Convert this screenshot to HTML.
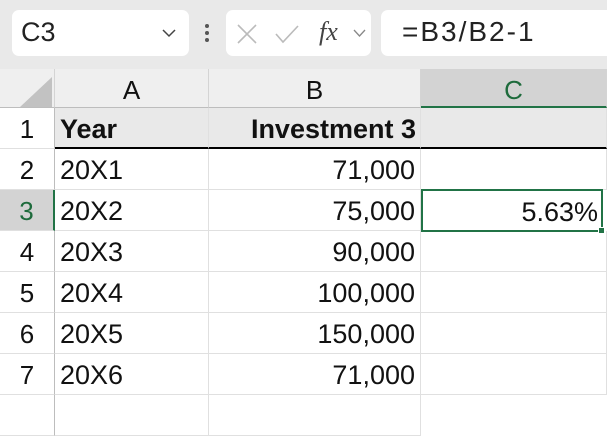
<!DOCTYPE html>
<html><head><style>
*{margin:0;padding:0;box-sizing:border-box}
body{width:607px;height:404px;overflow:hidden;background:#fff;font-family:"Liberation Sans",sans-serif;position:relative}
.tb{position:absolute;left:0;top:0;width:607px;height:69px;background:#e9e9e9}
.box{position:absolute;background:#fff;border-radius:7px;top:10px;height:46px}
.abs{position:absolute}
.ch{position:absolute;top:69px;height:39px;background:#efefef;border-right:1px solid #d4d4d4;border-bottom:1px solid #bdbdbd;font-size:26px;text-align:center;line-height:42px;color:#111}
.rh{position:absolute;left:0;width:55px;height:41px;background:#fff;border-right:1px solid #bdbdbd;border-bottom:1px solid #e0e0e0;font-size:26px;text-align:center;line-height:43px;color:#111}
.c{position:absolute;height:41px;border-right:1px solid #e0e0e0;border-bottom:1px solid #e0e0e0;font-size:27px;line-height:43px;color:#111;padding:0 5px;white-space:nowrap}
.r{text-align:right}
</style></head><body>
<div class="tb"></div>
<div class="box" style="left:12px;width:177px"><span class="abs" style="left:9px;top:7px;font-size:27px;color:#222">C3</span>
<svg class="abs" style="left:150px;top:18px" width="14" height="10"><path d="M1 2 L7 8 L13 2" stroke="#444" stroke-width="1.5" fill="none"/></svg></div>
<div class="abs" style="left:205px;top:24px;width:4px;height:4px;background:#555;border-radius:2px"></div>
<div class="abs" style="left:205px;top:31px;width:4px;height:4px;background:#555;border-radius:2px"></div>
<div class="abs" style="left:205px;top:38px;width:4px;height:4px;background:#555;border-radius:2px"></div>
<div class="box" style="left:226px;width:145px">
<svg class="abs" style="left:10px;top:13px" width="22" height="22"><path d="M2 2 L20 20 M20 2 L2 20" stroke="#bbb" stroke-width="1.6"/></svg>
<svg class="abs" style="left:48px;top:13px" width="26" height="22"><path d="M2 11 L9 19 L24 3" stroke="#bbb" stroke-width="1.6" fill="none"/></svg>
<span class="abs" style="left:93px;top:7px;font-family:'Liberation Serif',serif;font-style:italic;font-size:26px;color:#444">fx</span>
<svg class="abs" style="left:127px;top:19px" width="13" height="9"><path d="M1 1 L6.5 7 L12 1" stroke="#888" stroke-width="1.3" fill="none"/></svg>
</div>
<div class="box" style="left:381px;width:240px"><span class="abs" style="left:21px;top:6px;font-size:28px;color:#222;letter-spacing:2px">=B3/B2-1</span></div>

<div class="ch" style="left:0;width:55px;background:#efefef"><svg class="abs" style="left:20px;top:8px" width="32" height="30"><path d="M32 0 L32 30 L0 30 Z" fill="#c2c2c2"/></svg></div>
<div class="ch" style="left:55px;width:154px">A</div>
<div class="ch" style="left:209px;width:212px">B</div>
<div class="ch" style="left:421px;width:186px;background:#d3d3d3;color:#1e6b3c;border-bottom:2px solid #217346">C</div>

<div class="rh" style="top:108px">1</div>
<div class="c" style="top:108px;left:55px;width:154px;background:#e9e9e9;font-weight:bold;border-bottom:2px solid #000">Year</div>
<div class="c r" style="top:108px;left:209px;width:212px;background:#e9e9e9;font-weight:bold;border-bottom:2px solid #000;padding-right:4px">Investment 3</div>
<div class="c" style="top:108px;left:421px;width:186px;background:#e9e9e9;border-bottom:2px solid #000"></div>

<div class="rh" style="top:149px">2</div>
<div class="c" style="top:149px;left:55px;width:154px">20X1</div>
<div class="c r" style="top:149px;left:209px;width:212px">71,000</div>
<div class="c" style="top:149px;left:421px;width:186px"></div>

<div class="rh" style="top:190px;background:#d3d3d3;color:#1e6b3c;border-right:2px solid #217346">3</div>
<div class="c" style="top:190px;left:55px;width:154px">20X2</div>
<div class="c r" style="top:190px;left:209px;width:212px">75,000</div>
<div class="c r" style="top:189px;left:421px;width:182px;height:43px;border:2px solid #217346;line-height:42px;padding-right:3px">5.63%</div>
<div class="abs" style="left:598px;top:227px;width:7px;height:7px;background:#217346;border:1px solid #fff"></div>

<div class="rh" style="top:231px">4</div>
<div class="c" style="top:231px;left:55px;width:154px">20X3</div>
<div class="c r" style="top:231px;left:209px;width:212px">90,000</div>
<div class="c" style="top:231px;left:421px;width:186px"></div>

<div class="rh" style="top:272px">5</div>
<div class="c" style="top:272px;left:55px;width:154px">20X4</div>
<div class="c r" style="top:272px;left:209px;width:212px">100,000</div>
<div class="c" style="top:272px;left:421px;width:186px"></div>

<div class="rh" style="top:313px">6</div>
<div class="c" style="top:313px;left:55px;width:154px">20X5</div>
<div class="c r" style="top:313px;left:209px;width:212px">150,000</div>
<div class="c" style="top:313px;left:421px;width:186px"></div>

<div class="rh" style="top:354px">7</div>
<div class="c" style="top:354px;left:55px;width:154px">20X6</div>
<div class="c r" style="top:354px;left:209px;width:212px">71,000</div>
<div class="c" style="top:354px;left:421px;width:186px"></div>

<div class="rh" style="top:395px"></div>
<div class="c" style="top:395px;left:55px;width:154px"></div>
<div class="c" style="top:395px;left:209px;width:212px"></div>
</body></html>
